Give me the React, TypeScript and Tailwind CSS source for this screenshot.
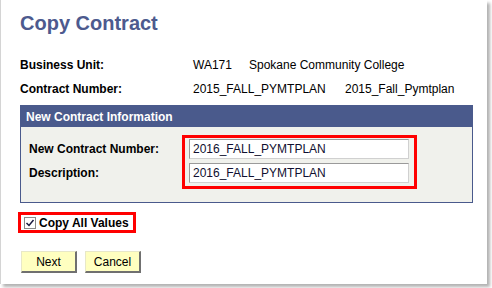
import React from 'react'

const font = { fontFamily: '"Liberation Sans", Arial, sans-serif' }

function InfoRow({ label, values }: { label: string; values: { text: string; w: string }[] }) {
  return (
    <div className="flex h-[24px] items-center text-[12px] text-black">
      <div className="w-[173px] font-bold">{label}</div>
      {values.map((v) => (
        <div key={v.text} className={v.w}>
          {v.text}
        </div>
      ))}
    </div>
  )
}

function Field({ value }: { value: string }) {
  return (
    <div className="flex h-[20px] w-[220px] items-center border border-t-[#9a9a9a] border-l-[#9a9a9a] border-r-[#d0d0d0] border-b-[#d0d0d0] bg-white px-[3px] text-[12px] text-[#101030]">
      {value}
    </div>
  )
}

function PsButton({ label }: { label: string }) {
  return (
    <button className="flex h-[22px] w-[56px] items-center justify-center border-t border-l border-t-[#e8e8c8] border-l-[#e8e8c8] border-r-2 border-b-2 border-r-[#707070] border-b-[#707070] bg-[#ffffc0] text-[12px] text-black">
      {label}
    </button>
  )
}

export default function App() {
  return (
    <div className="h-[288px] w-[492px] bg-white" style={font}>
      <div className="h-[284px] w-[487px] border-l border-[#d4d4d4] bg-white pl-[19px] shadow-[3px_3px_3px_rgba(0,0,0,0.3)]">
        <h1 className="pt-[11px] text-[20px] leading-[24px] font-bold text-[#4d5a8e]">Copy Contract</h1>

        <div className="mt-[18px]">
          <InfoRow
            label="Business Unit:"
            values={[
              { text: 'WA171', w: 'w-[56px]' },
              { text: 'Spokane Community College', w: '' },
            ]}
          />
          <InfoRow
            label="Contract Number:"
            values={[
              { text: '2015_FALL_PYMTPLAN', w: 'w-[152px]' },
              { text: '2015_Fall_Pymtplan', w: '' },
            ]}
          />
        </div>

        <div className="mt-[4px] w-[453px] border border-[#4a5a8c]">
          <div className="flex h-[21px] items-center bg-[#4a5a8c] px-[5px] text-[12px] font-bold text-white">
            New Contract Information
          </div>
          <div className="flex bg-[#f0f1ec] pt-[8px] pb-[13px] pl-[8px]">
            <div className="flex w-[153px] flex-col gap-[4px] pt-[4px] text-[12px] font-bold text-black">
              <div className="flex h-[20px] items-center">New Contract Number:</div>
              <div className="flex h-[20px] items-center">Description:</div>
            </div>
            <div className="flex w-[235px] flex-col gap-[4px] border-[3px] border-[#ff0000] pt-[1px] pr-[5px] pb-[3px] pl-[4px]">
              <Field value="2016_FALL_PYMTPLAN" />
              <Field value="2016_FALL_PYMTPLAN" />
            </div>
          </div>
        </div>

        <div className="mt-[9px] ml-[-2px] flex h-[21px] w-[118px] items-center gap-[3px] border-[3px] border-[#ff0000] pl-[3px]">
          <span className="flex h-[12px] w-[12px] items-center justify-center border border-[#8a8a8a] bg-white">
            <svg width="10" height="10" viewBox="0 0 10 10" fill="none">
              <path d="M1.5 5 L4 7.5 L8.5 2" stroke="#1a1a40" strokeWidth="1.5" />
            </svg>
          </span>
          <span className="text-[12px] font-bold text-black">Copy All Values</span>
        </div>

        <div className="mt-[18px] flex gap-[8px] pl-[1px]">
          <PsButton label="Next" />
          <PsButton label="Cancel" />
        </div>
      </div>
    </div>
  )
}
